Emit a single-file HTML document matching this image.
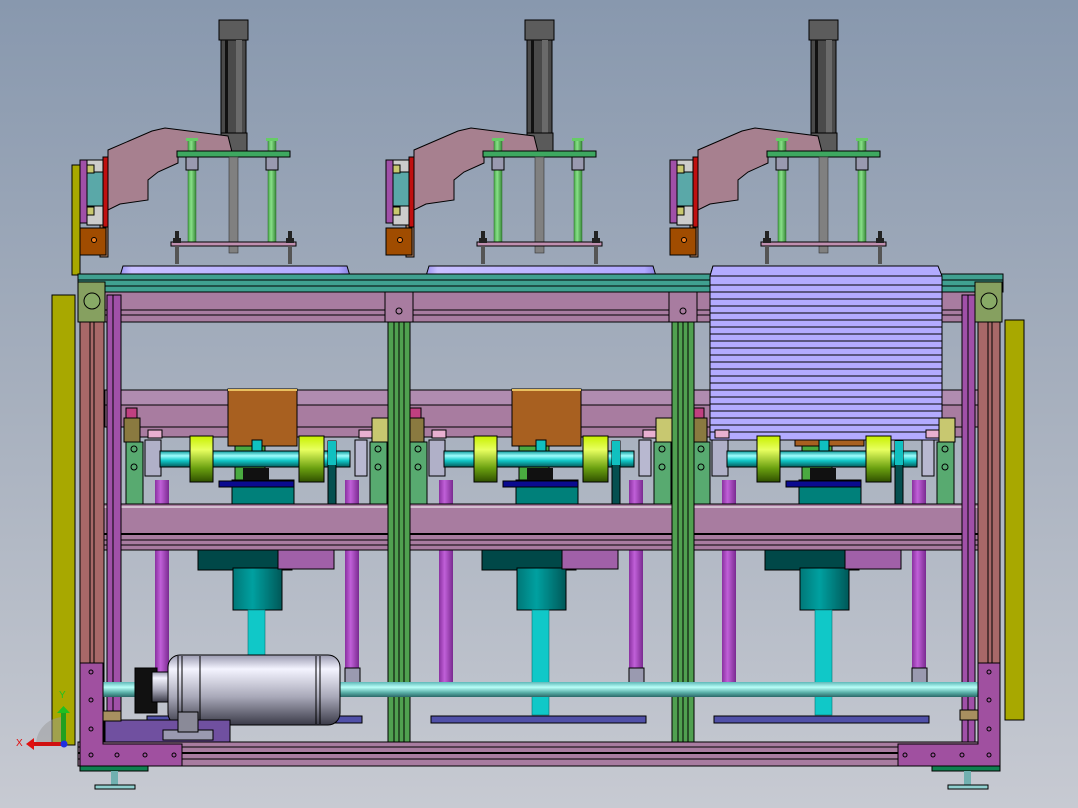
<!DOCTYPE html>
<html><head><meta charset="utf-8"><style>
html,body{margin:0;padding:0;width:1078px;height:808px;overflow:hidden}
svg{display:block}
</style></head><body>
<svg width="1078" height="808" viewBox="0 0 1078 808" xmlns="http://www.w3.org/2000/svg" font-family="Liberation Sans, sans-serif">
<defs>
<linearGradient id="bg" x1="0" y1="0" x2="0" y2="1"><stop offset="0" stop-color="#8898ae"/><stop offset="0.5" stop-color="#a7b0be"/><stop offset="1" stop-color="#c7cad2"/></linearGradient>
<linearGradient id="cyan" x1="0" y1="0" x2="0" y2="1"><stop offset="0" stop-color="#0a9a9a"/><stop offset="0.3" stop-color="#9ffcfc"/><stop offset="0.6" stop-color="#10c8c8"/><stop offset="1" stop-color="#055c5c"/></linearGradient>
<linearGradient id="rail" x1="0" y1="0" x2="0" y2="1"><stop offset="0" stop-color="#5fb8b8"/><stop offset="0.35" stop-color="#b8fff8"/><stop offset="0.7" stop-color="#5ab0a8"/><stop offset="1" stop-color="#2a6868"/></linearGradient>
<linearGradient id="roll" x1="0" y1="0" x2="0" y2="1"><stop offset="0" stop-color="#c8f000"/><stop offset="0.3" stop-color="#e8ff60"/><stop offset="0.7" stop-color="#6aa010"/><stop offset="1" stop-color="#305000"/></linearGradient>
<linearGradient id="silver" x1="0" y1="0" x2="0" y2="1"><stop offset="0" stop-color="#9a9ab0"/><stop offset="0.2" stop-color="#f4f4ff"/><stop offset="0.6" stop-color="#a8a8b8"/><stop offset="1" stop-color="#3a3a48"/></linearGradient>
<linearGradient id="tray" x1="0" y1="0" x2="1" y2="0"><stop offset="0" stop-color="#9890f0"/><stop offset="0.05" stop-color="#c8c0ff"/><stop offset="0.95" stop-color="#b0a8ff"/><stop offset="1" stop-color="#8880e0"/></linearGradient>
<linearGradient id="purp" x1="0" y1="0" x2="1" y2="0"><stop offset="0" stop-color="#8a30a0"/><stop offset="0.4" stop-color="#c060d8"/><stop offset="1" stop-color="#7a2a90"/></linearGradient>
<linearGradient id="grn" x1="0" y1="0" x2="1" y2="0"><stop offset="0" stop-color="#4aa84a"/><stop offset="0.4" stop-color="#88e088"/><stop offset="1" stop-color="#3a8a3a"/></linearGradient>
<linearGradient id="teal" x1="0" y1="0" x2="1" y2="0"><stop offset="0" stop-color="#007878"/><stop offset="0.4" stop-color="#00a0a0"/><stop offset="1" stop-color="#005858"/></linearGradient>
</defs>
<rect width="1078" height="808" fill="url(#bg)"/>

<rect x="52" y="295" width="23" height="450" fill="#a8a800" stroke="#000" stroke-width="1"/>
<rect x="72" y="165" width="8" height="110" fill="#a8a800" stroke="#000"/>
<rect x="1005" y="320" width="19" height="400" fill="#a8a800" stroke="#000"/>

<g id="up">
  <rect x="219" y="20" width="29" height="20" fill="#5c5c5c" stroke="#000"/>
  <rect x="221" y="40" width="25" height="95" fill="#4a4a4a" stroke="#000"/>
  <rect x="225" y="40" width="3" height="95" fill="#111"/>
  <rect x="236" y="40" width="6" height="95" fill="#6a6a6a"/>
  <rect x="221" y="133" width="26" height="18" fill="#5a5a5a" stroke="#000"/>
  <polygon points="108,150 152,131 165,128 228,136 232,152 178,152 178,163 158,172 148,180 148,200 120,204 108,210" fill="#a7808f" stroke="#000"/>
  <rect x="100" y="160" width="8" height="97" fill="#b08060" stroke="#000"/>
  <rect x="80" y="160" width="7" height="63" fill="#a050a8" stroke="#000"/>
  <rect x="87" y="160" width="16" height="65" fill="#cccccc" stroke="#000"/>
  <rect x="87" y="172" width="16" height="34" fill="#5aa8a8" stroke="#000"/>
  <rect x="87" y="165" width="7" height="8" fill="#c8c870" stroke="#000"/>
  <rect x="87" y="207" width="7" height="8" fill="#c8c870" stroke="#000"/>
  <rect x="103" y="157" width="5" height="70" fill="#c01010" stroke="#000"/>
  <rect x="80" y="228" width="26" height="27" fill="#a04c00" stroke="#000"/>
  <circle cx="94" cy="240" r="2.5" fill="#f08020" stroke="#000"/>
  <rect x="188" y="140" width="8" height="104" fill="url(#grn)" stroke="#2a6a2a" stroke-width="0.5"/>
  <rect x="268" y="140" width="8" height="104" fill="url(#grn)" stroke="#2a6a2a" stroke-width="0.5"/>
  <rect x="186" y="138" width="12" height="3" fill="#6c6"/>
  <rect x="266" y="138" width="12" height="3" fill="#6c6"/>
  <rect x="177" y="151" width="113" height="6" fill="#3ea860" stroke="#000"/>
  <rect x="186" y="157" width="12" height="13" fill="#9a9ab0" stroke="#000"/>
  <rect x="266" y="157" width="12" height="13" fill="#9a9ab0" stroke="#000"/>
  <rect x="229" y="157" width="9" height="96" fill="#808080" stroke="#333" stroke-width="0.6"/>
  <rect x="171" y="242" width="125" height="4" fill="#c090b0" stroke="#000"/>
  <rect x="173" y="238" width="8" height="5" fill="#222"/>
  <rect x="286" y="238" width="8" height="5" fill="#222"/>
  <rect x="175" y="231" width="4" height="8" fill="#222"/>
  <rect x="288" y="231" width="4" height="8" fill="#222"/>
  <rect x="175" y="246" width="4" height="18" fill="#555"/>
  <rect x="288" y="246" width="4" height="18" fill="#555"/>
  <polygon points="123,266 347,266 350,276 120,276" fill="url(#tray)" stroke="#000"/>
</g>
<use href="#up" transform="translate(306,0)"/>
<use href="#up" transform="translate(590,0)"/>

<rect x="78" y="274" width="925" height="18" fill="#40a090" stroke="#000"/>
<line x1="78" y1="280" x2="1003" y2="280" stroke="#000"/>
<line x1="78" y1="286" x2="1003" y2="286" stroke="#000"/>
<rect x="105" y="292" width="873" height="30" fill="#a87ca0" stroke="#000"/>
<line x1="105" y1="310" x2="978" y2="310" stroke="#000"/>
<line x1="105" y1="315" x2="978" y2="315" stroke="#000"/>

<rect x="105" y="390" width="873" height="15" fill="#b08cb0" stroke="#000"/>
<rect x="105" y="405" width="873" height="22" fill="#a87ca0" stroke="#000"/>
<rect x="140" y="427" width="830" height="10" fill="#a87ca0" stroke="#000"/>

<g id="box">
  <rect x="228" y="389" width="69" height="57" fill="#a86020" stroke="#000"/>
  <rect x="228" y="389" width="69" height="2" fill="#e8c060"/>
</g>
<use href="#box" transform="translate(284,0)"/>
<use href="#box" transform="translate(567,0)"/>

<!-- stacked plates right (in front) -->
<polygon points="713,266 938,266 942,276 942,440 710,440 710,276" fill="#b3abff" stroke="#000"/>
<g stroke="#000" stroke-width="1">
<line x1="710" y1="276" x2="942" y2="276"/><line x1="710" y1="285" x2="942" y2="285"/><line x1="710" y1="292" x2="942" y2="292"/>
<line x1="710" y1="299" x2="942" y2="299"/><line x1="710" y1="306" x2="942" y2="306"/><line x1="710" y1="313" x2="942" y2="313"/><line x1="710" y1="320" x2="942" y2="320"/><line x1="710" y1="327" x2="942" y2="327"/><line x1="710" y1="334" x2="942" y2="334"/><line x1="710" y1="341" x2="942" y2="341"/><line x1="710" y1="348" x2="942" y2="348"/><line x1="710" y1="355" x2="942" y2="355"/><line x1="710" y1="362" x2="942" y2="362"/><line x1="710" y1="369" x2="942" y2="369"/><line x1="710" y1="376" x2="942" y2="376"/><line x1="710" y1="383" x2="942" y2="383"/><line x1="710" y1="390" x2="942" y2="390"/><line x1="710" y1="397" x2="942" y2="397"/><line x1="710" y1="404" x2="942" y2="404"/><line x1="710" y1="411" x2="942" y2="411"/><line x1="710" y1="418" x2="942" y2="418"/><line x1="710" y1="425" x2="942" y2="425"/><line x1="710" y1="432" x2="942" y2="432"/>
</g>
<rect x="710" y="274" width="232" height="18" fill="#b3abff" opacity="0"/>

<g id="lo">
  <rect x="235" y="446" width="30" height="60" fill="#4aaa40" stroke="#000"/>
  <rect x="232" y="480" width="62" height="26" fill="#00807a" stroke="#000"/>
  <rect x="219" y="481" width="75" height="6" fill="#0a0a90" stroke="#000"/>
  <rect x="243" y="468" width="26" height="12" fill="#111"/>
  <rect x="252" y="440" width="10" height="12" fill="#10c0c0" stroke="#000"/>
  <rect x="126" y="442" width="17" height="62" fill="#58aa70" stroke="#000"/>
  <circle cx="134" cy="449" r="3" fill="none" stroke="#000"/><circle cx="134" cy="467" r="3" fill="none" stroke="#000"/>
  <rect x="124" y="418" width="16" height="24" fill="#8a7a40" stroke="#000"/>
  <rect x="126" y="408" width="11" height="10" fill="#c04080" stroke="#000"/>
  <rect x="155" y="480" width="14" height="26" fill="url(#purp)"/>
  <rect x="345" y="480" width="14" height="26" fill="url(#purp)"/>
  <rect x="145" y="440" width="16" height="36" fill="#b0b0c8" stroke="#000"/>
  <rect x="148" y="430" width="14" height="8" fill="#e8b0d0" stroke="#000"/>
  <rect x="160" y="451" width="190" height="16" fill="url(#cyan)" stroke="#000"/>
  <rect x="190" y="436" width="23" height="46" fill="url(#roll)" stroke="#000"/>
  <rect x="299" y="436" width="25" height="46" fill="url(#roll)" stroke="#000"/>
  <rect x="328" y="441" width="8" height="65" fill="#055050" stroke="#000"/>
  <rect x="328" y="441" width="8" height="24" fill="#10c0c0"/>
  <rect x="355" y="440" width="12" height="36" fill="#b8b8d0" stroke="#000"/>
  <rect x="359" y="430" width="14" height="8" fill="#e8b0d0" stroke="#000"/>
  <rect x="370" y="442" width="17" height="62" fill="#58aa70" stroke="#000"/>
  <circle cx="378" cy="449" r="3" fill="none" stroke="#000"/><circle cx="378" cy="467" r="3" fill="none" stroke="#000"/>
  <rect x="372" y="418" width="16" height="24" fill="#c8c870" stroke="#000"/>
  <rect x="198" y="550" width="94" height="20" fill="#004848" stroke="#000"/>
  <rect x="233" y="568" width="49" height="42" fill="url(#teal)" stroke="#000"/>
  <rect x="248" y="610" width="17" height="105" fill="#10c8c8" stroke="#0a7070" stroke-width="0.6"/>
  <rect x="278" y="550" width="56" height="19" fill="#a060a8" stroke="#000"/>
  <rect x="155" y="550" width="14" height="135" fill="url(#purp)"/>
  <rect x="345" y="550" width="14" height="135" fill="url(#purp)"/>
  <rect x="345" y="668" width="15" height="16" fill="#9a9ab0" stroke="#000"/>
  <rect x="147" y="716" width="215" height="7" fill="#5050a8" stroke="#000"/>
</g>
<use href="#lo" transform="translate(284,0)"/>
<use href="#lo" transform="translate(567,0)"/>

<rect x="103" y="504" width="875" height="46" fill="#a87ca0" stroke="#000"/>
<line x1="103" y1="507" x2="978" y2="507" stroke="#fff"/>
<line x1="103" y1="534" x2="978" y2="534" stroke="#000" stroke-width="2"/>
<line x1="103" y1="540" x2="978" y2="540" stroke="#000"/>
<line x1="103" y1="545" x2="978" y2="545" stroke="#000"/>

<g>
<rect x="388" y="300" width="22" height="442" fill="#50a050" stroke="#000"/>
<line x1="394" y1="300" x2="394" y2="742" stroke="#000"/><line x1="399" y1="300" x2="399" y2="742" stroke="#000"/><line x1="404" y1="300" x2="404" y2="742" stroke="#000"/>
<rect x="672" y="300" width="22" height="442" fill="#50a050" stroke="#000"/>
<line x1="678" y1="300" x2="678" y2="742" stroke="#000"/><line x1="683" y1="300" x2="683" y2="742" stroke="#000"/><line x1="688" y1="300" x2="688" y2="742" stroke="#000"/>
<rect x="385" y="292" width="28" height="30" fill="#a87ca0" stroke="#000"/>
<rect x="669" y="292" width="28" height="30" fill="#a87ca0" stroke="#000"/>
<circle cx="399" cy="311" r="3" fill="none" stroke="#000"/><circle cx="683" cy="311" r="3" fill="none" stroke="#000"/>
</g>

<rect x="78" y="282" width="27" height="40" fill="#86a060" stroke="#000"/>
<circle cx="92" cy="301" r="8" fill="#88aa66" stroke="#000"/>
<rect x="80" y="322" width="24" height="440" fill="#a86868" stroke="#000"/>
<line x1="90" y1="322" x2="90" y2="762" stroke="#000"/><line x1="94" y1="322" x2="94" y2="762" stroke="#000"/>
<rect x="107" y="295" width="14" height="450" fill="#a050a8" stroke="#000"/>
<line x1="113" y1="295" x2="113" y2="745" stroke="#000"/>
<rect x="975" y="282" width="27" height="40" fill="#86a060" stroke="#000"/>
<circle cx="989" cy="301" r="8" fill="#88aa66" stroke="#000"/>
<rect x="978" y="322" width="22" height="440" fill="#a86868" stroke="#000"/>
<line x1="988" y1="322" x2="988" y2="762" stroke="#000"/><line x1="992" y1="322" x2="992" y2="762" stroke="#000"/>
<rect x="962" y="295" width="13" height="450" fill="#a050a8" stroke="#000"/>
<line x1="968" y1="295" x2="968" y2="745" stroke="#000"/>

<rect x="100" y="682" width="880" height="15" fill="url(#rail)"/>

<rect x="135" y="668" width="22" height="45" fill="#111" stroke="#000"/>
<rect x="152" y="672" width="18" height="30" fill="url(#silver)" stroke="#000"/>
<rect x="168" y="655" width="172" height="70" rx="12" fill="url(#silver)" stroke="#000"/>
<line x1="178" y1="656" x2="178" y2="724" stroke="#000"/><line x1="182" y1="656" x2="182" y2="724" stroke="#000"/>
<line x1="200" y1="656" x2="200" y2="724" stroke="#000"/>
<line x1="316" y1="656" x2="316" y2="724" stroke="#000"/><line x1="320" y1="656" x2="320" y2="724" stroke="#000"/>
<rect x="105" y="720" width="125" height="24" fill="#7050a0" stroke="#000"/>
<rect x="163" y="730" width="50" height="10" fill="#9a9ab0" stroke="#000"/>
<rect x="178" y="712" width="20" height="20" fill="#8a8a98" stroke="#000"/>
<rect x="103" y="711" width="18" height="10" fill="#a89060" stroke="#000"/>
<rect x="960" y="710" width="20" height="10" fill="#a89060" stroke="#000"/>

<rect x="78" y="742" width="922" height="24" fill="#a87ca0" stroke="#000"/>
<line x1="78" y1="747" x2="1000" y2="747" stroke="#000"/>
<line x1="78" y1="753" x2="1000" y2="753" stroke="#000" stroke-width="2"/>
<line x1="78" y1="759" x2="1000" y2="759" stroke="#000"/>
<path d="M80,663 H103 V744 H182 V766 H80 Z" fill="#a050a0" stroke="#000"/>
<path d="M978,663 H1000 V766 H898 V744 H978 Z" fill="#a050a0" stroke="#000"/>
<g fill="none" stroke="#000"><circle cx="91" cy="672" r="2"/><circle cx="91" cy="700" r="2"/><circle cx="91" cy="729" r="2"/><circle cx="91" cy="755" r="2"/><circle cx="117" cy="755" r="2"/><circle cx="145" cy="755" r="2"/><circle cx="174" cy="755" r="2"/>
<circle cx="989" cy="672" r="2"/><circle cx="989" cy="700" r="2"/><circle cx="989" cy="729" r="2"/><circle cx="989" cy="755" r="2"/><circle cx="962" cy="755" r="2"/><circle cx="933" cy="755" r="2"/><circle cx="905" cy="755" r="2"/></g>
<rect x="80" y="766" width="68" height="5" fill="#108050" stroke="#000"/>
<rect x="932" y="766" width="68" height="5" fill="#108050" stroke="#000"/>
<rect x="111" y="771" width="7" height="15" fill="#70b0b0"/>
<rect x="95" y="785" width="40" height="4" fill="#90d0d0" stroke="#000"/>
<rect x="964" y="771" width="7" height="15" fill="#70b0b0"/>
<rect x="948" y="785" width="40" height="4" fill="#90d0d0" stroke="#000"/>

<path d="M36,745 A28,28 0 0 1 64,717 L64,745 Z" fill="#999" opacity="0.5"/>
<rect x="61" y="712" width="5" height="32" fill="#20a020"/>
<polygon points="57,713 70,713 63.5,706" fill="#20c020"/>
<rect x="33" y="742" width="30" height="4" fill="#d01010"/>
<polygon points="34,738 34,750 26,744" fill="#e01010"/>
<circle cx="64" cy="744" r="3.5" fill="#2030e0"/>
<text x="16" y="746" font-size="10" fill="#e01010">X</text>
<text x="59" y="698" font-size="10" fill="#20c020">Y</text>
</svg>
</body></html>
